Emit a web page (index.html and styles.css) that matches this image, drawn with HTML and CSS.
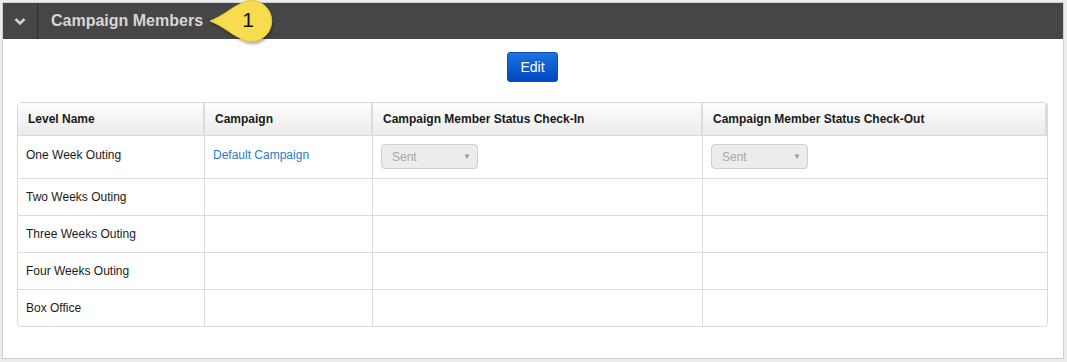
FILE: index.html
```html
<!DOCTYPE html>
<html>
<head>
<meta charset="utf-8">
<link rel="stylesheet" href="styles.css">
</head>
<body>
<div class="panel">
  <div class="panel-head">
    <div class="toggle">
      <svg width="12" height="9" viewBox="0 0 12 9"><path d="M1.5 2 L6 6.5 L10.5 2" fill="none" stroke="#d0d0d0" stroke-width="2.6"/></svg>
    </div>
    <div class="title">Campaign Members</div>
    <div class="callout">
      <svg width="72" height="48" viewBox="0 0 72 48">
        <defs>
          <filter id="sh" x="-20%" y="-20%" width="140%" height="150%">
            <feDropShadow dx="1" dy="2" stdDeviation="1.5" flood-color="#000" flood-opacity="0.35"/>
          </filter>
        </defs>
        <path d="M3 21 C16 16 24 8 32 4.5 A20.5 20.5 0 1 1 32 37.5 C24 34 16 26 3 21 Z" fill="#f7dc4f" stroke="#e2c434" stroke-width="1" filter="url(#sh)"/>
      </svg>
      <span class="callout-num">1</span>
    </div>
  </div>
  <div class="panel-body">
    <div class="actions"><button class="btn">Edit</button></div>
    <table class="grid">
      <thead>
        <tr>
          <th class="c1">Level Name</th>
          <th class="c2">Campaign</th>
          <th class="c3">Campaign Member Status Check-In</th>
          <th class="c4">Campaign Member Status Check-Out</th>
        </tr>
      </thead>
      <tbody>
        <tr class="first">
          <td>One Week Outing</td>
          <td><a class="link">Default Campaign</a></td>
          <td><div class="sel"><span>Sent</span><span class="arr">&#9660;</span></div></td>
          <td><div class="sel"><span>Sent</span><span class="arr">&#9660;</span></div></td>
        </tr>
        <tr><td>Two Weeks Outing</td><td></td><td></td><td></td></tr>
        <tr><td>Three Weeks Outing</td><td></td><td></td><td></td></tr>
        <tr><td>Four Weeks Outing</td><td></td><td></td><td></td></tr>
        <tr><td>Box Office</td><td></td><td></td><td></td></tr>
      </tbody>
    </table>
  </div>
</div>
</body>
</html>
```

FILE: styles.css
```css
html, body {
  margin: 0;
  padding: 0;
  background: #ececec;
}
body {
  padding: 2px 3px 2px 2px;
  font-family: "Liberation Sans", Arial, sans-serif;
  font-size: 12px;
  color: #222;
}
.panel {
  border: 1px solid #cfcfcf;
  background: #fff;
  height: 357px;
  box-sizing: border-box;
}
.panel-head {
  height: 36px;
  background: #464646;
  display: flex;
  align-items: center;
  position: relative;
}
.toggle {
  width: 35px;
  height: 36px;
  border-right: 1px solid #2e2e2e;
  display: flex;
  align-items: center;
  justify-content: center;
  box-sizing: border-box;
}
.title {
  margin-left: 13px;
  font-size: 16px;
  font-weight: bold;
  color: #d6d6d6;
}
.callout {
  position: absolute;
  left: 204px;
  top: -3px;
  width: 72px;
  height: 48px;
}
.callout svg { display: block; }
.callout-num {
  position: absolute;
  left: 31px;
  top: 8px;
  width: 20px;
  text-align: center;
  font-size: 21px;
  color: #111;
}
.panel-body {
  padding: 13px 15px 0 14px;
}
.actions {
  display: flex;
  justify-content: center;
  margin-bottom: 20px;
}
.btn {
  width: 51px;
  height: 30px;
  border: 1px solid #0a4fb8;
  border-radius: 3px;
  background: linear-gradient(#1d73e0, #0046c0);
  color: #fff;
  font-family: "Liberation Sans", Arial, sans-serif;
  font-size: 14px;
  padding: 0;
}
.grid {
  width: 1031px;
  border-collapse: separate;
  border-spacing: 0;
  border: 1px solid #dadada;
  border-radius: 4px;
  table-layout: fixed;
}
.grid th {
  height: 32px;
  text-align: left;
  font-weight: bold;
  font-size: 12px;
  color: #1a1a1a;
  padding: 0 10px;
  background: linear-gradient(#fdfdfd, #ebebeb);
  border-bottom: 1px solid #dadada;
  border-right: 2px solid #dcdcdc;
}
.grid th.c1 { width: 165px; }
.grid th.c2 { width: 146px; }
.grid th.c3 { width: 308px; }
.grid td {
  height: 36px;
  padding: 0 8px;
  border-bottom: 1px solid #dcdcdc;
  border-right: 1px solid #dcdcdc;
  vertical-align: middle;
  font-size: 12px;
  color: #1a1a1a;
}
.grid td:last-child { border-right: none; }
.grid tbody tr:last-child td { border-bottom: none; }
.grid tr.first td {
  height: 43px;
  vertical-align: top;
  padding-top: 12px;
  box-sizing: border-box;
}
.grid tr.first td:nth-child(3),
.grid tr.first td:nth-child(4) {
  padding-top: 8px;
  padding-left: 8px;
}
.link { color: #2a7ad2; }
.sel {
  width: 97px;
  height: 25px;
  border: 1px solid #cfcfcf;
  border-radius: 4px;
  background: #ececec;
  box-sizing: border-box;
  display: flex;
  align-items: center;
  justify-content: space-between;
  padding: 0 6px 0 10px;
  color: #a8a8a8;
  font-size: 12px;
}
.sel .arr { font-size: 8px; color: #999; }
```
